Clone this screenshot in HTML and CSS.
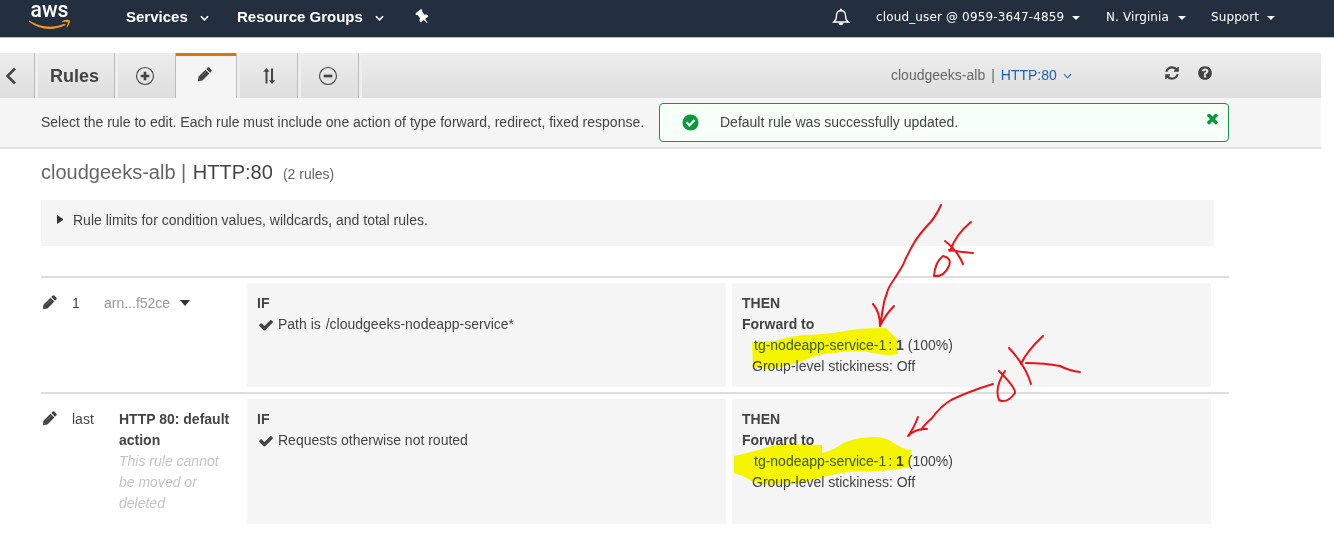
FILE: index.html
```html
<!DOCTYPE html>
<html lang="en">
<head>
<meta charset="utf-8">
<title>Rules</title>
<link rel="stylesheet" href="styles.css">
</head>
<body>
<svg class="defs" aria-hidden="true">
  <symbol id="pencil" viewBox="0 0 16 16"><path d="M.8 15.200l.9-5 7.400-7.300 4.100 4.100-7.400 7.300zM9.900 2.100l1.500-1.500q.9-.7 1.700 0l2.300 2.300q.7.900 0 1.700l-1.500 1.500z"/><path class="cut" d="M4.600 10.200l5-5M2.200 12.700l1.200 1.200"/></symbol>
  <symbol id="check" viewBox="0 0 1792 1792"><path d="M1671 566q0 40-28 68l-724 724-136 136q-28 28-68 28t-68-28l-136-136-362-362q-28-28-28-68t28-68l136-136q28-28 68-28t68 28l294 295 656-657q28-28 68-28t68 28l136 136q28 28 28 68z"/></symbol>
  <symbol id="chev" viewBox="0 0 10 6"><path d="M1 1l4 4 4-4" fill="none" stroke="currentColor"/></symbol>
</svg>

<header class="nav">
  <svg class="logo" viewBox="0 0 44 30"><text x="1.500" y="17.300" textLength="38" lengthAdjust="spacingAndGlyphs">aws</text><path class="smile" d="M0 20.500q18 10.500 35.500 3.200l1.300 1.300Q17 34.500 0 21.800z"/><path class="smile" d="M33.200 21.300q4-2.300 7.800-.9 0 4-3 7-.8.300-.4-.8 1.500-2.500 1.200-4.600-2-.6-5.300 0-1-.1-.3-.7z"/></svg>
  <span class="menu services">Services <svg class="chev"><use href="#chev"/></svg></span>
  <span class="menu groups">Resource Groups <svg class="chev"><use href="#chev"/></svg></span>
  <svg class="pin" viewBox="0 0 1792 1792"><path transform="rotate(-38 896 896)" d="M1536 1216q0 26-19 45t-45 19h-429l-51 483q-2 12-10.500 20.500t-20.500 8.500h-1q-27 0-32-27l-76-485h-404q-26 0-45-19t-19-45q0-123 78.500-221.500t177.500-98.500v-512q-52 0-90-38t-38-90 38-90 90-38h640q52 0 90 38t38 90-38 90-90 38v512q99 0 177.500 98.500t78.500 221.500z"/></svg>
  <div class="account">
    <svg class="bell" viewBox="0 0 18 18"><path d="M1.800 14q2.700-2 2.700-6.500Q4.500 3 9 2.500q4.500.5 4.500 5 0 4.500 2.700 6.500z" fill="none" stroke="#fff" stroke-width="1.300"/><path d="M8 .8h2v2H8zM6.500 15h5q-.5 2.300-2.500 2.300T6.500 15z"/></svg>
    <span class="user">cloud_user @ 0959-3647-4859</span><i class="caret"></i>
    <span class="region">N. Virginia</span><i class="caret"></i>
    <span class="support">Support</span><i class="caret"></i>
  </div>
</header>

<nav class="toolbar">
  <div class="tab back"><svg viewBox="0 0 12 18"><path d="M10 1.500L2.500 9l7.500 7.500" fill="none" stroke="#444" stroke-width="2.500"/></svg></div>
  <div class="tab title">Rules</div>
  <div class="tab add"><svg class="round" viewBox="0 0 20 20"><circle cx="10" cy="10" r="8.500"/><path d="M5.700 10h8.600M10 5.700v8.600"/></svg></div>
  <div class="tab active"><svg class="pencil"><use href="#pencil"/></svg></div>
  <div class="tab sort"><svg class="arrows" viewBox="0 0 14 18"><path d="M4.500 16.500V3M10 1.500V15" fill="none" stroke="#444" stroke-width="2"/><path d="M1.200 4.800L4.500 1l3 3.800zM7 13.200l3 3.800 3.300-3.800z"/></svg></div>
  <div class="tab remove"><svg class="round" viewBox="0 0 20 20"><circle cx="10" cy="10" r="8.500"/><path d="M5.700 10h8.600"/></svg></div>
  <div class="crumb"><span>cloudgeeks-alb</span><span class="bar">|</span><span class="link">HTTP:80</span><svg class="chev thin"><use href="#chev"/></svg></div>
  <div class="tools">
    <svg viewBox="0 0 1792 1792"><path d="M1639 1056q0 5-1 7-64 268-268 434.500t-478 166.500q-146 0-282.500-55t-243.500-157l-129 129q-19 19-45 19t-45-19-19-45v-448q0-26 19-45t45-19h448q26 0 45 19t19 45-19 45l-137 137q71 66 161 102t187 36q134 0 250-65t186-179q11-17 53-117 8-23 30-23h192q13 0 22.500 9.500t9.500 22.500zm25-800v448q0 26-19 45t-45 19h-448q-26 0-45-19t-19-45 19-45l138-138q-148-137-349-137-134 0-250 65t-186 179q-11 17-53 117-8 23-30 23h-199q-13 0-22.500-9.500t-9.500-22.500v-7q65-268 270-434.500t480-166.500q146 0 284 55.500t245 156.500l130-129q19-19 45-19t45 19 19 45z"/></svg>
    <svg viewBox="0 0 1792 1792"><path d="M1024 1376v-192q0-14-9-23t-23-9h-192q-14 0-23 9t-9 23v192q0 14 9 23t23 9h192q14 0 23-9t9-23zm256-672q0-88-55.500-163t-138.500-116-170-41q-243 0-371 213-15 24 8 42l132 100q7 6 19 6 16 0 25-12 53-68 86-92 34-24 86-24 48 0 85.500 26t37.500 59q0 38-20 61t-68 45q-63 28-115.500 86.500t-52.500 125.500v36q0 14 9 23t23 9h192q14 0 23-9t9-23q0-19 21.500-49.500t54.500-49.500q32-18 49-28.500t46-35 44.500-48 28-60.500 12.500-81zm384 192q0 209-103 385.500t-279.500 279.500-385.500 103-385.500-103-279.500-279.500-103-385.500 103-385.500 279.500-279.500 385.500-103 385.500 103 279.500 279.500 103 385.500z"/></svg>
  </div>
</nav>

<section class="notice">
  <p>Select the rule to edit. Each rule must include one action of type forward, redirect, fixed response.</p>
  <div class="alert">
    <svg class="ok" viewBox="0 0 18 18"><circle cx="9" cy="9" r="8.500"/><path d="M4.800 8.800l3.100 3.200 5.400-5.600" fill="none" stroke="#fff" stroke-width="2.400"/></svg>
    <span>Default rule was successfully updated.</span>
    <svg class="close" viewBox="302 430 1188 1188"><path d="M1490 1322q0 40-28 68l-136 136q-28 28-68 28t-68-28l-294-294-294 294q-28 28-68 28t-68-28l-136-136q-28-28-28-68t28-68l294-294-294-294q-28-28-28-68t28-68l136-136q28-28 68-28t68 28l294 294 294-294q28-28 68-28t68 28l136 136q28 28 28 68t-28 68l-294 294 294 294q28 28 28 68z"/></svg>
  </div>
</section>

<main>
  <h1>cloudgeeks-alb | <b>HTTP:80</b><small>(2 rules)</small></h1>
  <div class="limits"><i class="tri"></i>Rule limits for condition values, wildcards, and total rules.</div>

  <div class="rule first">
    <div class="edit"><svg class="pencil"><use href="#pencil"/></svg></div>
    <div class="order">1</div>
    <div class="name arn">arn...f52ce<i class="drop"></i></div>
    <div class="cell"><strong>IF</strong><div class="cond"><svg><use href="#check"/></svg>Path is <span class="path">/cloudgeeks-nodeapp-service*</span></div></div>
    <div class="cell"><strong>THEN</strong><strong>Forward to</strong><div class="target"><span class="tg">tg-nodeapp-service-1</span><span class="colon">:</span> <b>1</b> (100%)</div><div class="sticky">Group-level stickiness: Off</div></div>
  </div>
  <div class="rule last">
    <div class="edit"><svg class="pencil"><use href="#pencil"/></svg></div>
    <div class="order">last</div>
    <div class="name"><strong>HTTP 80: default action</strong><em>This rule cannot be moved or deleted</em></div>
    <div class="cell"><strong>IF</strong><div class="cond"><svg><use href="#check"/></svg>Requests otherwise not routed</div></div>
    <div class="cell"><strong>THEN</strong><strong>Forward to</strong><div class="target"><span class="tg">tg-nodeapp-service-1</span><span class="colon">:</span> <b>1</b> (100%)</div><div class="sticky">Group-level stickiness: Off</div></div>
  </div>
</main>

<svg class="marker" viewBox="0 0 1334 543">
  <path d="M752 342L775 341Q790 336 805 335Q830 334 845 331Q860 328 886 328Q892 334 898 340V354Q890 356 878 354Q855 348 835 353Q820 353 805 360Q790 366 768 369L753 367z"/>
  <path d="M734 456Q752 452 762 449Q775 444 790 444L822 445V453Q835 450 843 443Q857 437 875 437Q885 437 892 442Q902 449 911 450L910 467Q885 472 858 471Q835 473 820 478Q800 484 780 484Q757 486 750 480Q742 475 734 473z"/>
</svg>
<svg class="ink" viewBox="0 0 1334 543">
  <path d="M941 205Q936 217 927 226Q918 236 914 243Q907 255 903 265Q897 275 893 281Q888 288 887 293Q884 300 883 308L880 326M873 304Q880 312 880 326Q886 314 894 306"/>
  <path d="M943 256Q935 262 934 276Q944 277 949 266Q952 258 943 256M971 222Q956 234 950 251M945 241Q957 250 963 264M949 250Q960 252 973 253"/>
  <path d="M993 384Q970 391 951 400Q940 407 932 418Q924 425 921 430M918 417Q914 428 908 436Q916 428 927 429"/>
  <path d="M1005 371Q994 388 999 400Q1007 404 1015 393Q1016 388 999 371M1043 336Q1026 352 1021 364M1009 348Q1026 366 1031 384M1026 363Q1045 363 1060 366Q1070 371 1080 372"/>
</svg>
</body>
</html>
```
FILE: styles.css
```css
* { box-sizing: border-box; }
body { margin: 0; width: 1334px; height: 543px; overflow: hidden; position: relative; background: #fff; color: #444; font: 14px/21px "Liberation Sans", Arial, sans-serif; }
.defs { position: absolute; width: 0; height: 0; }
svg { display: block; fill: currentColor; flex: none; }
p, h1 { margin: 0; }

.nav { height: 38px; background: #232f3e; border-bottom: 1px solid #b5bac0; color: #fff; display: flex; align-items: flex-start; padding-left: 29px; }
.logo { width: 44px; height: 30px; overflow: visible; }
.logo text { font: 500 22px Roboto, "Open Sans", sans-serif; }
.smile { fill: #f29a22; }
.chev { stroke-width: 1.8px; }
.menu { display: flex; align-items: center; font-weight: bold; font-size: 15px; line-height: 34px; white-space: nowrap; }
.menu .chev { width: 9px; height: 6px; margin: 2px 0 0 12px; }
.services { margin-left: 53px; width: 111px; }
.groups { width: 177px; }
.pin { width: 16px; height: 16px; margin: 9px -1px 0 0; }
.account { display: flex; align-items: center; height: 34px; margin-left: 403px; font: 12px "DejaVu Sans", sans-serif; white-space: nowrap; }
.bell { width: 18px; height: 18px; margin-right: 26px; }
.caret { border: 4px solid transparent; border-top: 4px solid #fff; border-bottom: 0; margin-top: 1px; }
.user { width: 196px; letter-spacing: .14px; }
.region { width: 72px; margin-left: 26px; letter-spacing: .1px; }
.support { width: 56px; margin-left: 25px; letter-spacing: .1px; }

.toolbar { display: flex; width: 1321px; height: 45px; margin-top: 15px; background: linear-gradient(#ededed, #dedede); }
.tab { width: 61px; border-right: 3px solid #eee; box-shadow: inset -1px 0 #bbb; display: flex; align-items: center; justify-content: center; color: #444; }
.back { width: 38px; padding-right: 13px; }
.back svg { width: 12px; height: 18px; }
.title { width: 80px; font-size: 18px; font-weight: bold; padding: 1px 4px 0 0; }
.add { width: 58px; border-right: 0; padding-right: 4px; }
.active { width: 64px; background: linear-gradient(#d5760f 3px, #f5f5f5 3px) padding-box; padding: 0 5px 3px 0; }
.remove { padding-right: 4px; }
.sort { padding-right: 0; }
.round { width: 20px; height: 20px; fill: none; stroke: #444; stroke-width: 1.1px; }
.round path { stroke-width: 2.7px; }
.pencil { width: 15px; height: 15px; }
.cut { fill: none; stroke: #999; stroke-width: .5px; }
.arrows { width: 14px; height: 18px; }
.crumb { display: flex; align-items: center; margin-left: 529px; width: 273px; color: #666; }
.bar { margin: 0 6px; }
.link { color: #2361b5; }
.thin { width: 9px; height: 6px; margin-left: 6px; color: #2361b5; stroke-width: 1.2px; }
.tools { display: flex; gap: 17px; padding-top: 12px; color: #444; }
.tools svg { width: 16px; height: 16px; }

.notice { width: 1321px; height: 51px; background: #f5f5f5; border-bottom: 2px solid #e2e2e2; display: flex; align-items: center; padding-left: 41px; white-space: nowrap; }
.notice p { width: 618px; }
.alert { width: 570px; height: 39px; border: 1px solid #12944a; border-radius: 4px; background: #f6fff8; display: flex; align-items: center; padding: 0 10px 0 22px; }
.ok { width: 17px; height: 17px; color: #099a3c; margin-right: 21px; }
.close { width: 11px; height: 11px; color: #099a3c; margin: -6px 0 0 auto; }

main { width: 1188px; margin-left: 41px; }
h1 { font-size: 20px; font-weight: normal; line-height: 24px; padding-top: 11px; color: #666; }
h1 b { font-weight: normal; color: #444; margin-left: 1px; }
h1 small { font-size: 14px; margin-left: 10px; }
.limits { width: 1173px; height: 46px; margin: 14px 0 30px; background: #f5f5f5; padding: 10px 16px; display: flex; }
.tri { border: 4.5px solid transparent; border-left: 6px solid #333; border-right: 0; height: 9px; margin: 5px 10px 0 0; }
.rule { border-top: 2px solid #ddd; padding-top: 5px; display: grid; grid-template-columns: 31px 47px 128px 479px 479px; }
.rule .cell { background: #f5f5f5; padding: 10px; }
.rule .cell:last-child { margin-left: 6px; width: 479px; }
.first { height: 116px; padding-bottom: 5px; }
.first .cell { height: 104px; }
.last .cell { height: 125px; }
.edit { padding: 12px 0 0 1px; }
.order { padding-top: 10px; }
.name { padding: 10px 16px 0 0; }
.arn { color: #999; margin-left: -15px; display: flex; }
.drop { border: 5px solid transparent; border-top: 6px solid #333; border-bottom: 0; height: 6px; margin: 7px 0 0 10px; }
strong { display: block; }
.name em { display: block; color: #c4c4c4; }
.cond { display: flex; margin-left: 1px; white-space: pre; }
.cond svg { width: 16px; height: 16px; margin: 3px 4px 0 0; }
.path { margin-left: 1px; }
.target { margin-left: 12px; }
.tg { color: #3b5c3b; }
.colon { margin-left: 2px; }
.sticky { margin-left: 10px; }

.marker, .ink { position: absolute; left: 0; top: 0; width: 1334px; height: 543px; pointer-events: none; }
.marker { fill: #ff0; mix-blend-mode: multiply; }
.ink { fill: none; stroke: #ee1118; stroke-width: 2px; stroke-linecap: round; stroke-linejoin: round; }
```
